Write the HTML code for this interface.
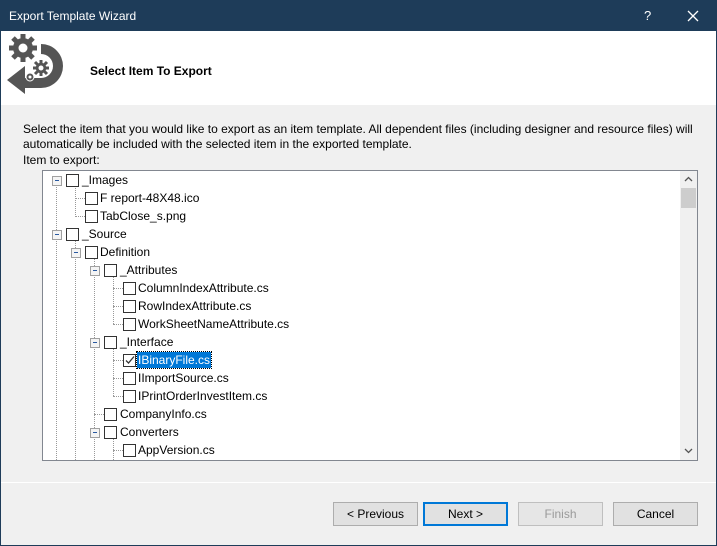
<!DOCTYPE html>
<html><head><meta charset="utf-8"><style>
body{margin:0;width:717px;height:546px;overflow:hidden;font-family:"Liberation Sans",sans-serif;font-size:12px;color:#000}
.win{position:absolute;left:0;top:0;width:715px;height:544px;border:1px solid #1e3c59;background:#f0f0f0}
.title{position:absolute;left:0;top:0;width:715px;height:30px;background:#1e3c59;color:#fff}
.hdr{position:absolute;left:0;top:30px;width:715px;height:74px;background:#fff}
.a{position:absolute;white-space:nowrap}
.tree{position:absolute;left:42px;top:170px;width:654px;height:289px;border:1px solid #828790;background:#fff;overflow:hidden}
.sb{position:absolute;left:680px;top:171px;width:17px;height:289px;background:#f0f0f0}
.ex{position:absolute;width:8px;height:8px;border:1px solid #a0a0a0;background:#f4f4f4}
.ex:after{content:"";position:absolute;left:2px;top:3px;width:4px;height:1px;background:#2a5aa0}
.cb{position:absolute;width:11px;height:11px;border:1px solid #333;background:#fff}
.t{position:absolute;white-space:nowrap;line-height:16px}
.v{position:absolute;border-left:1px dotted #999;width:0}
.h{position:absolute;border-top:1px dotted #999;height:0}
.btn{position:absolute;top:502px;width:83px;height:22px;border:1px solid #adadad;background:#e1e1e1;text-align:center;line-height:23px}
</style></head><body>
<div class="win">
<div class="title"><span class="a" style="left:8px;top:8px">Export Template Wizard</span>
<span class="a" style="left:643px;top:7px;font-size:13px">?</span>
<svg class="a" style="left:686px;top:9px" width="12" height="12"><path d="M1 1L11 11M11 1L1 11" stroke="#fff" stroke-width="1.3"/></svg></div>
<div class="hdr">
<svg class="a" style="left:4px;top:2px" width="62" height="62" viewBox="0 0 62 62">
<g fill="#555">
<path d="M36 11A22 22 0 0 1 36 55H20V61L2 47L20 33V45H36A12 12 0 0 0 36 21Z"/>
<circle cx="18" cy="15" r="10"/>
<g stroke="#555" stroke-width="5"><path d="M18 1v28M4 15h28M8 5l20 20M28 5L8 25"/></g>
<circle cx="18" cy="15" r="4.5" fill="#fff"/>
<g stroke="#fff" stroke-width="1.5">
<circle cx="36" cy="35" r="6"/>
</g>
<g stroke="#555" stroke-width="3"><path d="M36 27v16M28 35h16M30 29l12 12M42 29l-12 12"/></g>
<circle cx="36" cy="35" r="2.5" fill="#fff"/>
<circle cx="25" cy="44" r="4" stroke="#fff" stroke-width="1"/><circle cx="25" cy="44" r="1.5" fill="#fff"/>
</g></svg>
<span class="a" style="left:89px;top:33px;font-weight:bold">Select Item To Export</span></div>
<span class="a" style="left:22px;top:121px">Select the item that you would like to export as an item template. All dependent files (including designer and resource files) will</span>
<span class="a" style="left:22px;top:136px">automatically be included with the selected item in the exported template.</span>
<span class="a" style="left:22px;top:152px">Item to export:</span>
</div>
<div class="tree"></div>
<div class="sb"><svg class="a" style="left:4px;top:5px" width="9" height="6"><path d="M1 5L4.5 1.5L8 5" fill="none" stroke="#555" stroke-width="1.3"/></svg><div class="a" style="left:1px;top:17px;width:15px;height:20px;background:#cdcdcd"></div>
<svg class="a" style="left:4px;top:277px" width="9" height="6"><path d="M1 1L4.5 4.5L8 1" fill="none" stroke="#555" stroke-width="1.3"/></svg></div>
<div style="position:absolute;left:43px;top:171px;width:637px;height:289px;overflow:hidden">
<div class="v" style="left:13px;top:9px;height:290px"></div>
<div class="v" style="left:32px;top:17px;height:27px"></div>
<div class="v" style="left:32px;top:63px;height:230px"></div>
<div class="v" style="left:51px;top:81px;height:210px"></div>
<div class="v" style="left:70px;top:99px;height:54px"></div>
<div class="v" style="left:70px;top:171px;height:54px"></div>
<div class="v" style="left:70px;top:261px;height:30px"></div>
<div class="h" style="left:32px;top:27px;width:10px"></div>
<div class="h" style="left:32px;top:45px;width:10px"></div>
<div class="h" style="left:70px;top:117px;width:10px"></div>
<div class="h" style="left:70px;top:135px;width:10px"></div>
<div class="h" style="left:70px;top:153px;width:10px"></div>
<div class="h" style="left:70px;top:189px;width:10px"></div>
<div class="h" style="left:70px;top:207px;width:10px"></div>
<div class="h" style="left:70px;top:225px;width:10px"></div>
<div class="h" style="left:51px;top:243px;width:10px"></div>
<div class="h" style="left:70px;top:279px;width:10px"></div>
<div class="ex" style="left:9px;top:5px"></div><div class="cb" style="left:23px;top:3px"></div><span class="t" style="left:39px;top:1px">_Images</span>
<div class="cb" style="left:42px;top:21px"></div><span class="t" style="left:57px;top:19px">F report-48X48.ico</span>
<div class="cb" style="left:42px;top:39px"></div><span class="t" style="left:57px;top:37px">TabClose_s.png</span>
<div class="ex" style="left:9px;top:59px"></div><div class="cb" style="left:23px;top:57px"></div><span class="t" style="left:39px;top:55px">_Source</span>
<div class="ex" style="left:28px;top:77px"></div><div class="cb" style="left:42px;top:75px"></div><span class="t" style="left:57px;top:73px">Definition</span>
<div class="ex" style="left:47px;top:95px"></div><div class="cb" style="left:61px;top:93px"></div><span class="t" style="left:77px;top:91px">_Attributes</span>
<div class="cb" style="left:80px;top:111px"></div><span class="t" style="left:95px;top:109px">ColumnIndexAttribute.cs</span>
<div class="cb" style="left:80px;top:129px"></div><span class="t" style="left:95px;top:127px">RowIndexAttribute.cs</span>
<div class="cb" style="left:80px;top:147px"></div><span class="t" style="left:95px;top:145px">WorkSheetNameAttribute.cs</span>
<div class="ex" style="left:47px;top:167px"></div><div class="cb" style="left:61px;top:165px"></div><span class="t" style="left:77px;top:163px">_Interface</span>
<div class="cb" style="left:80px;top:183px"><svg width="11" height="11" style="position:absolute;left:0;top:0"><path d="M2 5.5L4.5 8L10 1.5" fill="none" stroke="#333" stroke-width="1.3"/></svg></div><span class="t" style="left:94px;top:181px;background:#0078d7;color:#fff;padding:0 1px;outline:1px dotted #000">IBinaryFile.cs</span>
<div class="cb" style="left:80px;top:201px"></div><span class="t" style="left:95px;top:199px">IImportSource.cs</span>
<div class="cb" style="left:80px;top:219px"></div><span class="t" style="left:95px;top:217px">IPrintOrderInvestItem.cs</span>
<div class="cb" style="left:61px;top:237px"></div><span class="t" style="left:77px;top:235px">CompanyInfo.cs</span>
<div class="ex" style="left:47px;top:257px"></div><div class="cb" style="left:61px;top:255px"></div><span class="t" style="left:77px;top:253px">Converters</span>
<div class="cb" style="left:80px;top:273px"></div><span class="t" style="left:95px;top:271px">AppVersion.cs</span>
</div>
<div class="a" style="left:1px;top:482px;width:715px;height:1px;background:#fff"></div>
<div class="btn" style="left:333px">&lt; Previous</div>
<div class="btn" style="left:423px;border:2px solid #0078d7;width:81px;height:20px;line-height:21px">Next &gt;</div>
<div class="btn" style="left:518px;border-color:#bfbfbf;background:#e6e6e6;color:#9a9a9a">Finish</div>
<div class="btn" style="left:613px">Cancel</div>
</body></html>
